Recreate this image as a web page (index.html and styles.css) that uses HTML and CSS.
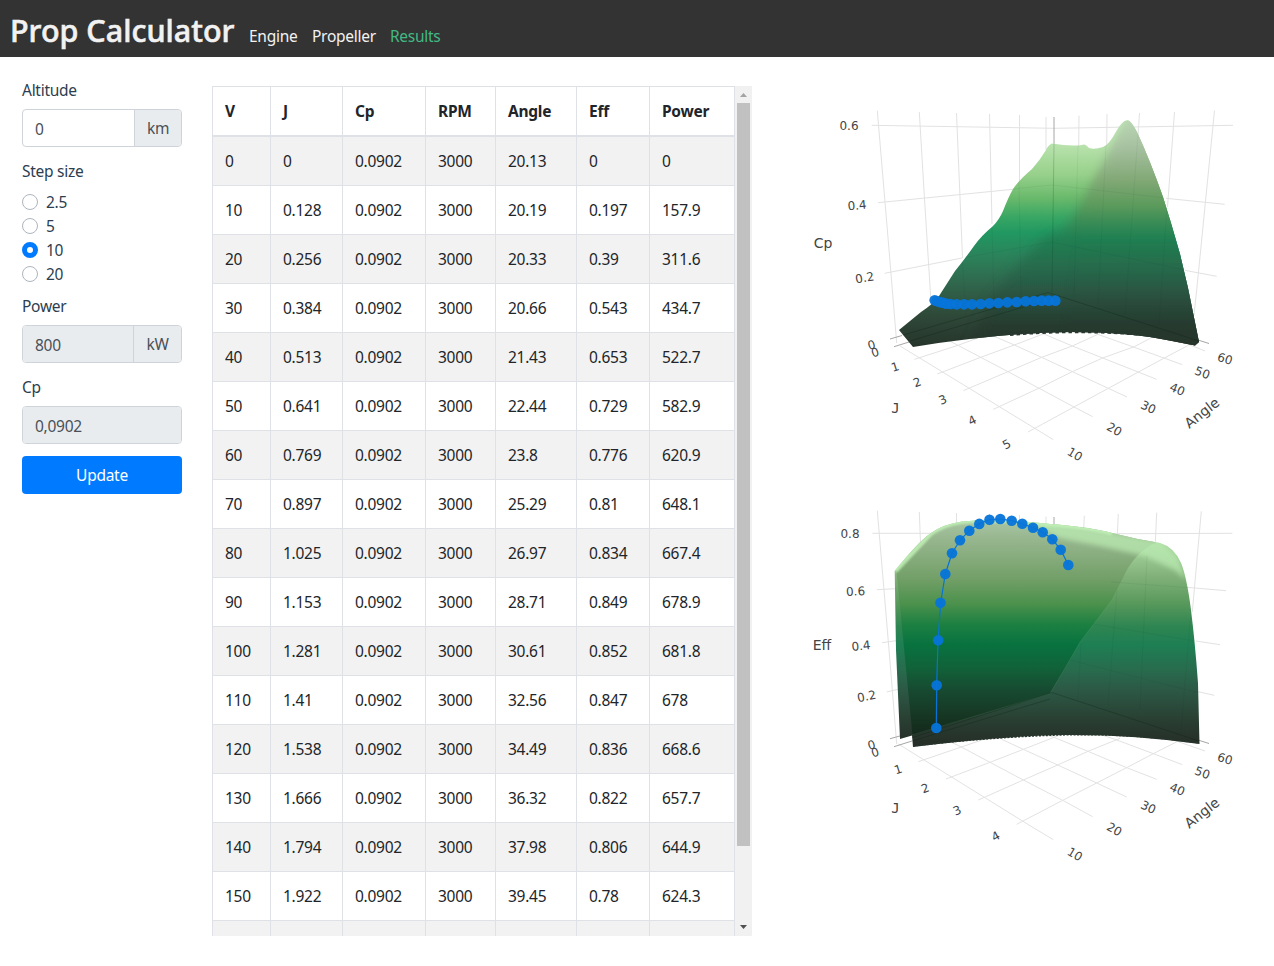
FILE: index.html
```html
<!DOCTYPE html>
<html lang="en">
<head>
<meta charset="utf-8">
<title>Prop Calculator</title>
<link rel="stylesheet" href="styles.css">
</head>
<body>
<header class="navbar">
  <h1 class="brand">Prop Calculator</h1>
  <nav class="nav"><a class="nav-link w-engine">Engine</a><a class="nav-link w-prop">Propeller</a><a class="nav-link active">Results</a></nav>
</header>
<main class="layout">
  <form class="sidebar">
    <div class="group"><div class="label">Altitude</div>
      <div class="input-group"><div class="input">0</div><div class="addon km">km</div></div></div>
    <div class="group steps"><div class="label">Step size</div>
      <div class="radio"><i class="dot"></i>2.5</div>
      <div class="radio"><i class="dot"></i>5</div>
      <div class="radio"><i class="dot on"></i>10</div>
      <div class="radio"><i class="dot"></i>20</div></div>
    <div class="group"><div class="label">Power</div>
      <div class="input-group"><div class="input disabled">800</div><div class="addon kw">kW</div></div></div>
    <div class="group"><div class="label">Cp</div>
      <div class="input-group"><div class="input disabled">0,0902</div></div></div>
    <div class="button">Update</div>
  </form>
  <section class="pane">
    <table class="results">
      <colgroup><col class="c1"><col class="c2"><col class="c3"><col class="c4"><col class="c5"><col class="c6"><col class="c7"></colgroup>
      <thead><tr><th>V</th><th>J</th><th>Cp</th><th>RPM</th><th>Angle</th><th>Eff</th><th>Power</th></tr></thead>
      <tbody>
        <tr><td>0</td><td>0</td><td>0.0902</td><td>3000</td><td>20.13</td><td>0</td><td>0</td></tr>
        <tr><td>10</td><td>0.128</td><td>0.0902</td><td>3000</td><td>20.19</td><td>0.197</td><td>157.9</td></tr>
        <tr><td>20</td><td>0.256</td><td>0.0902</td><td>3000</td><td>20.33</td><td>0.39</td><td>311.6</td></tr>
        <tr><td>30</td><td>0.384</td><td>0.0902</td><td>3000</td><td>20.66</td><td>0.543</td><td>434.7</td></tr>
        <tr><td>40</td><td>0.513</td><td>0.0902</td><td>3000</td><td>21.43</td><td>0.653</td><td>522.7</td></tr>
        <tr><td>50</td><td>0.641</td><td>0.0902</td><td>3000</td><td>22.44</td><td>0.729</td><td>582.9</td></tr>
        <tr><td>60</td><td>0.769</td><td>0.0902</td><td>3000</td><td>23.8</td><td>0.776</td><td>620.9</td></tr>
        <tr><td>70</td><td>0.897</td><td>0.0902</td><td>3000</td><td>25.29</td><td>0.81</td><td>648.1</td></tr>
        <tr><td>80</td><td>1.025</td><td>0.0902</td><td>3000</td><td>26.97</td><td>0.834</td><td>667.4</td></tr>
        <tr><td>90</td><td>1.153</td><td>0.0902</td><td>3000</td><td>28.71</td><td>0.849</td><td>678.9</td></tr>
        <tr><td>100</td><td>1.281</td><td>0.0902</td><td>3000</td><td>30.61</td><td>0.852</td><td>681.8</td></tr>
        <tr><td>110</td><td>1.41</td><td>0.0902</td><td>3000</td><td>32.56</td><td>0.847</td><td>678</td></tr>
        <tr><td>120</td><td>1.538</td><td>0.0902</td><td>3000</td><td>34.49</td><td>0.836</td><td>668.6</td></tr>
        <tr><td>130</td><td>1.666</td><td>0.0902</td><td>3000</td><td>36.32</td><td>0.822</td><td>657.7</td></tr>
        <tr><td>140</td><td>1.794</td><td>0.0902</td><td>3000</td><td>37.98</td><td>0.806</td><td>644.9</td></tr>
        <tr><td>150</td><td>1.922</td><td>0.0902</td><td>3000</td><td>39.45</td><td>0.78</td><td>624.3</td></tr>
        <tr><td></td><td></td><td></td><td></td><td></td><td></td><td></td></tr>
      </tbody>
    </table>
    <div class="scrollbar">
      <svg class="arrow" viewBox="0 0 17 17"><path d="M5 11H12L8.5 7Z" fill="#a3a3a3"/></svg>
      <div class="thumb"></div>
      <svg class="arrow" viewBox="0 0 17 17"><path d="M5 6H12L8.5 10Z" fill="#505050"/></svg>
    </div>
  </section>
  <section class="charts">
    <svg class="plot" viewBox="782 86 480 400">
      <defs>
        <linearGradient id="cpBack" gradientUnits="userSpaceOnUse" x1="0" y1="118" x2="0" y2="347">
          <stop offset="0" stop-color="#c9f3c1"/><stop offset=".12" stop-color="#b8e2ac"/><stop offset=".25" stop-color="#96d08a"/><stop offset=".35" stop-color="#69b96b"/><stop offset=".43" stop-color="#3aa764"/><stop offset=".5" stop-color="#219861"/><stop offset=".6" stop-color="#2b835b"/><stop offset=".73" stop-color="#30654c"/><stop offset=".86" stop-color="#2f4939"/><stop offset="1" stop-color="#26342b"/>
        </linearGradient>
        <linearGradient id="cpFront" gradientUnits="userSpaceOnUse" x1="0" y1="118" x2="0" y2="347">
          <stop offset="0" stop-color="#b9d7b3"/><stop offset=".12" stop-color="#a8c2a2"/><stop offset=".27" stop-color="#82a876"/><stop offset=".38" stop-color="#5d9b5c"/><stop offset=".46" stop-color="#378b56"/><stop offset=".53" stop-color="#1e7f52"/><stop offset=".65" stop-color="#286b4d"/><stop offset=".78" stop-color="#295140"/><stop offset=".9" stop-color="#283b2f"/><stop offset="1" stop-color="#26342b"/>
        </linearGradient>
        <clipPath id="cpShape"><path id="cpOutline" d="M899 330L913 347Q1000 333 1070 332Q1130 332 1172 341L1195 345.500L1199 342L1188 288L1180 254L1171 223L1163 197Q1150 160 1137 132Q1130 119 1127 120.500Q1123 120 1117 130Q1109 145 1103 147Q1094 150 1089 148Q1085 143 1082 145Q1070 146.500 1052 143.500Q1048 145 1046 150Q1040 160 1032 169Q1018 181 1013 189Q1008 198 1003 211Q999 220 993 226Q981 236 974 246Q964 260 955 271L939 296Q932 305 921 312Z"/></clipPath>
        <filter id="soft" x="-20%" y="-20%" width="140%" height="140%"><feGaussianBlur stdDeviation="6"/></filter>
        <filter id="soft2" x="-20%" y="-20%" width="140%" height="140%"><feGaussianBlur stdDeviation="2.500"/></filter>
      </defs>
      <g class="grid">
        <path d="M877.300 110.700L885 202L890.700 270L896.700 343M919.300 112L924.500 199L931 302M956.500 113L962.500 258M989.500 114L992 224M1019.500 115V182M1046 117V150M1079 115.700L1078.700 146M1107 114L1106.700 146M1139.500 113L1138 136M1174.500 112L1167.500 207M1214.500 110.500L1196.700 290L1194 315M871.700 125.300L1054 128.300L1233 125.300M878 202.700L1013 189.300M1166 198.300L1224.700 204.300M884.700 273.300L962 258M1184.700 270.300L1216.700 276.300"/>
        <g transform="translate(850 270) scale(.33333)">
          <path d="M150 228L610 509M280 203L324 226L474 305L672 411L728 440M430 198L493 225L575 262L667 305L775 355L831 381M560 183L667 228L758 264L920 328M735 190L853 232L997 284M990 213L1065 243M193 268L324 226L400 198M262 312L392 262L493 225L590 188M340 362L474 305L575 262L667 228L750 190M430 418L568 354L667 305L758 264L853 230L910 200M534 486L672 411L775 355L943 264L1015 226"/>
        </g>
        <path class="axis" d="M1054 117V145M890 339L902 335.500M894 346.700L910 341.700M1198 340L1209 343.500"/>
      </g>
      <g clip-path="url(#cpShape)">
        <rect x="890" y="110" width="320" height="245" fill="url(#cpBack)"/>
        <path d="M1127 112L1114 145L1095 180L1078 211L1066 227L1042 240L1022 260L990 300L960 365L1220 365L1210 112Z" fill="url(#cpFront)" filter="url(#soft)"/>
        <path d="M1127 116L1112 151L1094 182L1080 214L1074 260L1060 360L1220 365L1210 112Z" fill="url(#cpFront)" opacity=".5" filter="url(#soft2)"/>
        <path class="inner" d="M1019 180L1021 300M992 225L994 308M962 258L966 316M1078 145L1074 297M1106 145L1098 306M1138 134L1125 315M1167 207L1159 325M1013 189L1052 185L1166 198M962 258L1052 242L1185 270"/>
        <path class="inner strong" d="M900 336L1048 292.500L1199 341M910 341L1050 299"/>
        <path class="inner post" d="M1054 144L1052 292"/>
      </g>
      <path d="M1010 334.500Q1070 329.500 1130 333.500T1195 344" fill="none" stroke="#27372d" stroke-width="3" stroke-dasharray="3.500 3"/>
      <g class="dots" transform="translate(850 270) scale(.33333)">
        <circle cx="254" cy="91" r="16"/><circle cx="260" cy="93" r="16"/><circle cx="268" cy="96" r="16"/><circle cx="277" cy="98" r="16"/><circle cx="288" cy="101" r="16"/><circle cx="301" cy="102" r="16"/><circle cx="320" cy="103" r="16"/><circle cx="342" cy="103" r="16"/><circle cx="366" cy="103" r="16"/><circle cx="392" cy="102" r="16"/><circle cx="418" cy="100" r="16"/><circle cx="445" cy="99" r="16"/><circle cx="472" cy="97" r="16"/><circle cx="500" cy="96" r="16"/><circle cx="527" cy="94" r="16"/><circle cx="552" cy="93" r="16"/><circle cx="575" cy="92" r="16"/><circle cx="596" cy="92" r="16"/><circle cx="616" cy="92" r="16"/>
      </g>
      <g class="ticks">
        <text transform="translate(849 125)" y="4.500">0.6</text><text transform="translate(857 205) rotate(-5)" y="4.500">0.4</text><text transform="translate(864.500 277.500) rotate(-10)" y="4.500">0.2</text>
        <text transform="translate(871.500 344.500) rotate(-16)" y="4.500">0</text><text transform="translate(875 352) rotate(-18)" y="4.500">0</text><text transform="translate(895 366.500) rotate(-18)" y="4.500">1</text><text transform="translate(917 382) rotate(-20)" y="4.500">2</text><text transform="translate(942.500 399.500) rotate(-22)" y="4.500">3</text><text transform="translate(972 420) rotate(-25)" y="4.500">4</text><text transform="translate(1006.500 444) rotate(-28)" y="4.500">5</text>
        <text transform="translate(1075 454) rotate(31)" y="4.500">10</text><text transform="translate(1114.500 429) rotate(29)" y="4.500">20</text><text transform="translate(1148.500 407) rotate(25)" y="4.500">30</text><text transform="translate(1177.500 389) rotate(22)" y="4.500">40</text><text transform="translate(1202.500 372.500) rotate(20)" y="4.500">50</text><text transform="translate(1225 358.500) rotate(17)" y="4.500">60</text>
      </g>
      <g class="titles"><text x="823" y="248">Cp</text><text class="mono" x="895.500" y="413">J</text><text transform="translate(1202.500 413.500) rotate(-38)" y="4">Angle</text></g>
    </svg>
    <svg class="plot" viewBox="782 486 480 400">
      <defs>
        <linearGradient id="effBack" gradientUnits="userSpaceOnUse" x1="0" y1="520" x2="0" y2="747">
          <stop offset="0" stop-color="#bff0b6"/><stop offset=".11" stop-color="#a9d7a0"/><stop offset=".24" stop-color="#84b37b"/><stop offset=".36" stop-color="#5b9a5d"/><stop offset=".47" stop-color="#2e8551"/><stop offset=".55" stop-color="#1e7f54"/><stop offset=".66" stop-color="#286b4d"/><stop offset=".75" stop-color="#2c5845"/><stop offset=".88" stop-color="#293f32"/><stop offset="1" stop-color="#252c27"/>
        </linearGradient>
        <linearGradient id="effFront" gradientUnits="userSpaceOnUse" x1="0" y1="520" x2="0" y2="747">
          <stop offset="0" stop-color="#a8c5a3"/><stop offset=".1" stop-color="#94b48b"/><stop offset=".26" stop-color="#729f67"/><stop offset=".37" stop-color="#4b914c"/><stop offset=".46" stop-color="#1c8042"/><stop offset=".55" stop-color="#08723f"/><stop offset=".65" stop-color="#116239"/><stop offset=".75" stop-color="#174a31"/><stop offset=".87" stop-color="#163522"/><stop offset="1" stop-color="#121f17"/>
        </linearGradient>
        <clipPath id="effShape"><path d="M894.700 571Q917 543 931 533Q944 524 962 521.500Q1000 518 1050 524Q1090 527 1112 533Q1135 539 1160 543Q1174 547 1181 563Q1187 578 1191 610Q1195 642 1198 683L1199.500 744Q1130 734 1060 735Q990 737 913 747L912 735.500L900 739L896 650Z"/></clipPath>
      </defs>
      <g class="grid">
        <path d="M877.300 510.700L885 602L890.700 670L896.700 744M919.300 512L920.500 543M956.500 513V522M989.500 514V520M1019.500 515V522M1046 516.500V525M1084.300 515.700L1083.700 529M1118.300 514L1117.300 535M1156.700 512.700L1155.300 543M1201.300 511.300L1192.300 612M872.300 533.300H934M1115 533.700L1232.300 533.300M877 589.700L895 588.700M1186.700 587.300L1226 590.700M882 642.700L896 640.700M1196 641L1220 644.700M886.700 692L898 689.300M1198 691.700L1214.300 695.300"/>
        <g transform="translate(790 670) scale(.33333)">
          <path d="M325 222L720 467L790 509M470 210L514 231L600 277L700 330L818 391L908 440M635 208L700 238L803 285L920 339L1010 381M740 185L792 202L894 244L1010 293L1100 328M930 193L975 208L1090 251L1177 284M1150 210L1245 243M385 275L514 231L600 202M468 327L600 277L700 238L810 195M565 390L700 330L803 285L894 244L990 205M680 463L818 391L920 339L1010 293L1090 251L1165 213"/>
        </g>
        <path class="axis" d="M1054 517V526M890 738.700L901 735.700M894 746.700L912 741M1198 740L1209 743.500"/>
      </g>
      <g clip-path="url(#effShape)">
        <rect x="890" y="515" width="315" height="235" fill="url(#effBack)"/>
        <path d="M896.500 571Q917 543 931 530L962 516H1160L1155 543Q1142 547 1128 568L1112 600L1080 642L1068 663L1050 693.500L912.500 735.500Z" fill="url(#effFront)"/>
        <path d="M1010 520L1050 522L1160 541L1178 556L1186 580L1175 570L1145 556L1100 546L1060 538L1035 527Z" fill="#b9eab0" opacity=".75" filter="url(#soft2)"/>
        <path d="M895 571L931 533Q944 524 962 521.500Q1000 518 1050 524Q1090 527 1112 533" fill="none" stroke="#c3f3b8" stroke-width="5" opacity=".85" filter="url(#edge)"/>
        <filter id="edge"><feGaussianBlur stdDeviation="1"/></filter>
        <path d="M1155 543Q1142 547 1128 568L1112 600L1080 642L1068 663L1050 693.500L912 735" class="fold"/>
        <path class="inner" d="M1111 582L1192 588M1093 624L1195 641M1070 660L1199 693M1147 555L1140 710M1117 590L1108 705M1081 643L1078 700M1192 600L1181 730"/>
        <path class="inner strong" d="M905 740L1052 692.500L1199 741M912 741L1050 699"/>
      </g>
      <path d="M913 746Q990 737 1060 735T1199 743" fill="none" stroke="#27372d" stroke-width="1.500" stroke-dasharray="2 1.500"/>
      <path class="trace" d="M936.300 728L936.700 685.300L938 640.700L940.700 602.700L945.300 574L952 553.300L960 540.300L969.300 530.700L979.300 523.700L989.700 519.700L1000.300 519L1011.700 520.700L1022.300 523.700L1033 527.700L1042.700 532L1052.300 539.300L1060.700 549.700L1068.300 565"/>
      <g class="dots">
        <circle cx="936.300" cy="728" r="5.300"/><circle cx="936.700" cy="685.300" r="5.300"/><circle cx="938.200" cy="640.300" r="5.300"/><circle cx="940.500" cy="602.700" r="5.300"/><circle cx="945.300" cy="574" r="5.300"/><circle cx="952" cy="553.300" r="5.300"/><circle cx="960" cy="540.300" r="5.300"/><circle cx="969.300" cy="530.700" r="5.300"/><circle cx="979.300" cy="523.900" r="5.300"/><circle cx="989.500" cy="519.700" r="5.300"/><circle cx="1000.300" cy="519" r="5.300"/><circle cx="1011.700" cy="520.700" r="5.300"/><circle cx="1022.300" cy="523.700" r="5.300"/><circle cx="1033" cy="527.700" r="5.300"/><circle cx="1042.700" cy="532.200" r="5.300"/><circle cx="1052.300" cy="539.300" r="5.300"/><circle cx="1060.700" cy="549.700" r="5.300"/><circle cx="1068.300" cy="565" r="5.300"/>
      </g>
      <g class="ticks">
        <text transform="translate(850 533.500)" y="4.500">0.8</text><text transform="translate(855.500 591) rotate(-3)" y="4.500">0.6</text><text transform="translate(861 645.500) rotate(-6)" y="4.500">0.4</text><text transform="translate(866.500 696) rotate(-11)" y="4.500">0.2</text>
        <text transform="translate(871.500 744.500) rotate(-16)" y="4.500">0</text><text transform="translate(875 752) rotate(-18)" y="4.500">0</text><text transform="translate(898 769) rotate(-18)" y="4.500">1</text><text transform="translate(925 788) rotate(-20)" y="4.500">2</text><text transform="translate(957 810) rotate(-23)" y="4.500">3</text><text transform="translate(995.500 836) rotate(-28)" y="4.500">4</text>
        <text transform="translate(1075 854) rotate(31)" y="4.500">10</text><text transform="translate(1114.500 829) rotate(29)" y="4.500">20</text><text transform="translate(1148.500 807) rotate(25)" y="4.500">30</text><text transform="translate(1177.500 789) rotate(22)" y="4.500">40</text><text transform="translate(1202.500 772.500) rotate(20)" y="4.500">50</text><text transform="translate(1225 758.500) rotate(17)" y="4.500">60</text>
      </g>
      <g class="titles"><text x="822" y="649.500">Eff</text><text class="mono" x="895.500" y="813">J</text><text transform="translate(1202.500 813.500) rotate(-38)" y="4">Angle</text></g>
    </svg>
  </section>
</main>
</body>
</html>
```
FILE: styles.css
```css
* { box-sizing: border-box; }
body { margin: 0; height: 966px; overflow: hidden; background: #fff; color: #212529; font: 15.5px/24px "Noto Sans", "Open Sans", sans-serif; letter-spacing: -.27px; }
.navbar { height: 57px; background: #333; display: flex; align-items: baseline; padding: 11px 10px 0; }
.brand { margin: 0; width: 224px; font: 500 30.5px/38px "Noto Sans", "Open Sans", sans-serif; letter-spacing: 0; color: #f2f2f2; -webkit-text-stroke: .6px #f2f2f2; white-space: nowrap; }
.nav { display: flex; margin-left: 15px; color: #f2f2f2; }
.nav-link { display: block; white-space: nowrap; }
.w-engine { width: 63px; }
.w-prop { width: 78px; }
.active { color: #42b983; }
.layout { display: flex; align-items: flex-start; }
.sidebar { width: 160px; margin: 21px 30px 0 22px; color: #2c3e50; }
.group { margin-bottom: 12px; }
.steps { margin-bottom: 8px; }
.label { height: 24px; margin-bottom: 7px; }
.input-group { display: flex; height: 38px; border: 1px solid #ced4da; border-radius: 4px; overflow: hidden; }
.input { flex: 1; padding: 7px 12px 5px; color: #495057; }
.disabled { background: #e9ecef; }
.addon { padding: 6px 0; text-align: center; background: #e9ecef; border-left: 1px solid #ced4da; color: #495057; }
.km { width: 47px; }
.kw { width: 48px; }
.radio { display: flex; align-items: center; height: 24px; gap: 8px; }
.dot { width: 16px; height: 16px; border: 1px solid #adb5bd; border-radius: 50%; background: #fff; }
.dot.on { border: 5px solid #007bff; }
.button { height: 38px; line-height: 38px; text-align: center; color: #fff; background: #007bff; border-radius: 4px; }
.pane { display: flex; width: 540px; height: 850px; margin-top: 29px; overflow: hidden; }
.results { table-layout: fixed; width: 523px; flex: none; align-self: flex-start; border-collapse: separate; border-spacing: 0; border: solid #dee2e6; border-width: 1px 0 0 1px; }
.c1 { width: 58px; } .c2 { width: 72px; } .c3 { width: 83px; } .c4 { width: 70px; } .c5 { width: 81px; } .c6 { width: 73px; } .c7 { width: 85px; }
.results th, .results td { padding: 0 0 0 12px; text-align: left; border: solid #dee2e6; border-width: 0 1px 1px 0; height: 49px; }
.results th { height: 50px; border-bottom-width: 2px; font-weight: 700; }
.results tbody tr:nth-child(odd) { background: #f2f2f2; }
.scrollbar { width: 17px; background: #f1f1f1; display: flex; flex-direction: column; }
.arrow { width: 17px; height: 17px; display: block; }
.thumb { width: 13px; height: 743px; margin: 0 2px 73px; background: #c1c1c1; }
.charts { margin: 29px 0 0 30px; width: 480px; letter-spacing: 0; }
.plot { display: block; width: 480px; height: 400px; }
.grid { fill: none; stroke: #e2e2e2; stroke-width: 1; }
.grid g { stroke-width: 3; }
.axis { stroke: #a6a6a6; }
.inner { fill: none; stroke: #123; stroke-opacity: .05; stroke-width: 1; }
.strong { stroke: #061a0c; stroke-opacity: .25; }
.post { stroke: #0a3a1c; stroke-opacity: .2; }
.fold { fill: none; stroke: #9fd0a0; stroke-opacity: .12; stroke-width: 1; }
.trace { fill: none; stroke: #0674d9; stroke-width: 1.2; }
.dots { fill: #0674d9; fill-opacity: .95; }
.ticks { font: 12px "DejaVu Sans", sans-serif; fill: #444; text-anchor: middle; }
.titles { font: 14px "DejaVu Sans", sans-serif; fill: #444; text-anchor: middle; }
.mono { font-family: "DejaVu Sans Mono", monospace; }
```
